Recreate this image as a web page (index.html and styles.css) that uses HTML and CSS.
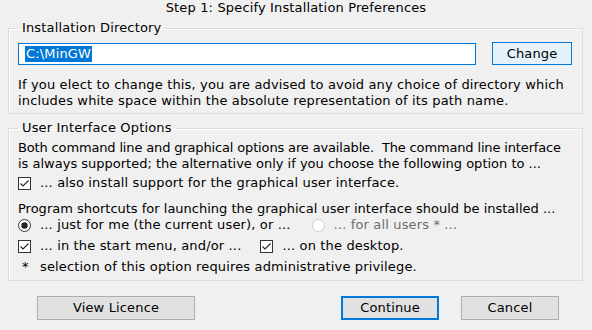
FILE: index.html
```html
<!DOCTYPE html>
<html>
<head>
<meta charset="utf-8">
<link rel="stylesheet" href="styles.css">
</head>
<body>
<div class="dialog">
  <div class="title">Step 1: Specify Installation Preferences</div>
  <fieldset class="group group-dir">
    <legend>Installation Directory</legend>
    <div class="dir-row">
      <div class="input"><span class="sel">C:\MinGW</span></div>
      <div class="btn btn-hot">Change</div>
    </div>
    <p class="note">If you elect to change this, you are advised to avoid any choice of directory which<br>includes white space within the absolute representation of its path name.</p>
  </fieldset>
  <fieldset class="group group-ui">
    <legend>User Interface Options</legend>
    <p class="text"><span class="tight">Both command line and graphical options are available.&nbsp; The command line interface</span><br>is always supported; the alternative only if you choose the following option to ...</p>
    <div class="row row-gui"><span class="cb"><svg viewBox="0 0 13 13" width="13" height="13"><rect x="0.5" y="0.5" width="12" height="12" fill="#fff" stroke="#333"/><path d="M2.5 6.5 L5 9 L10.5 3.5" fill="none" stroke="#222" stroke-width="1.1"/></svg></span><span>... also install support for the graphical user interface.</span></div>
    <p class="text text-prog">Program shortcuts for launching the graphical user interface should be installed ...</p>
    <div class="row row-radio"><span class="rb"><svg viewBox="0 0 13 13" width="13" height="13"><circle cx="6.5" cy="6.5" r="6" fill="#fff" stroke="#333"/><circle cx="6.5" cy="6.5" r="3.2" fill="#222"/></svg></span><span>... just for me (the current user), or ...</span><span class="rb rb-off"><svg viewBox="0 0 13 13" width="13" height="13"><circle cx="6.5" cy="6.5" r="6" fill="#fff" stroke="#ccc"/></svg></span><span class="disabled">... for all users * ...</span></div>
    <div class="row row-cb2"><span class="cb"><svg viewBox="0 0 13 13" width="13" height="13"><rect x="0.5" y="0.5" width="12" height="12" fill="#fff" stroke="#333"/><path d="M2.5 6.5 L5 9 L10.5 3.5" fill="none" stroke="#222" stroke-width="1.1"/></svg></span><span>... in the start menu, and/or ...</span><span class="cb cb-second"><svg viewBox="0 0 13 13" width="13" height="13"><rect x="0.5" y="0.5" width="12" height="12" fill="#fff" stroke="#333"/><path d="M2.5 6.5 L5 9 L10.5 3.5" fill="none" stroke="#222" stroke-width="1.1"/></svg></span><span>... on the desktop.</span></div>
    <div class="row row-star"><span class="star">*</span><span>selection of this option requires administrative privilege.</span></div>
  </fieldset>
  <div class="buttons">
    <div class="btn btn-licence">View Licence</div>
    <div class="btn btn-continue">Continue</div>
    <div class="btn btn-cancel">Cancel</div>
  </div>
</div>
</body>
</html>
```
FILE: styles.css
```css
html, body {
  margin: 0;
  padding: 0;
  background: #f0f0f0;
}
body {
  font-family: "DejaVu Sans", Verdana, sans-serif;
  font-size: 13px;
  letter-spacing: 0.15px;
  line-height: 16px;
  color: #000;
}
.dialog {
  width: 592px;
  height: 330px;
  box-sizing: border-box;
}
.title {
  text-align: center;
  height: 16px;
  line-height: 16px;
}
.group {
  margin: 4px 9px 0 8px;
  padding: 0 10px 4px 9px;
  border: 1px solid #dcdcdc;
  box-shadow: inset 1px 1px 0 #fff;
  min-width: 0;
}
.group legend {
  padding: 0 4px;
  line-height: 16px;
}
.dir-row {
  display: flex;
  align-items: center;
  justify-content: space-between;
  margin-top: 6px;
}
.input {
  width: 458px;
  height: 22px;
  box-sizing: border-box;
  border: 1px solid #0078d7;
  background: #fff;
  padding: 2px 6px;
  display: flex;
  align-items: center;
}
.sel {
  background: #0078d7;
  color: #fff;
  line-height: 16px;
  padding: 0 1px;
}
.btn {
  box-sizing: border-box;
  height: 24px;
  border: 1px solid #adadad;
  background: #e1e1e1;
  display: flex;
  align-items: center;
  justify-content: center;
}
.btn-hot {
  width: 80px;
  height: 23px;
  border-color: #0078d7;
  background: #e5f1fb;
}
.note, .text {
  white-space: nowrap;
}
.note {
  margin: 12px 0 0 0;
}
.group-ui {
  margin-top: 6px;
  padding-bottom: 5px;
}
.text {
  margin: 4px 0 0 0;
  letter-spacing: 0;
}
.tight {
  letter-spacing: -0.15px;
}
.row {
  display: flex;
  align-items: center;
  white-space: nowrap;
  height: 16px;
}
.cb, .rb {
  display: inline-flex;
  flex: none;
  width: 13px;
  height: 13px;
  margin-right: 9px;
}
.row-gui { margin-top: 3px; }
.text-prog { margin-top: 10px; }
.row-radio { margin-top: 0; }
.rb-off { margin-left: 21px; }
.disabled { color: #6d6d6d; }
.row-cb2 { margin-top: 5px; }
.cb-second { margin-left: 19px; }
.row-star { margin-top: 5px; }
.star {
  display: inline-block;
  width: 22px;
  padding-left: 4px;
  box-sizing: border-box;
}
.buttons {
  height: 24px;
  margin-top: 15px;
  display: flex;
}
.btn-licence {
  width: 158px;
  margin-left: 37px;
}
.btn-continue {
  width: 98px;
  margin-left: 146px;
  border: 2px solid #0078d7;
}
.btn-cancel {
  width: 98px;
  margin-left: 22px;
}
```
